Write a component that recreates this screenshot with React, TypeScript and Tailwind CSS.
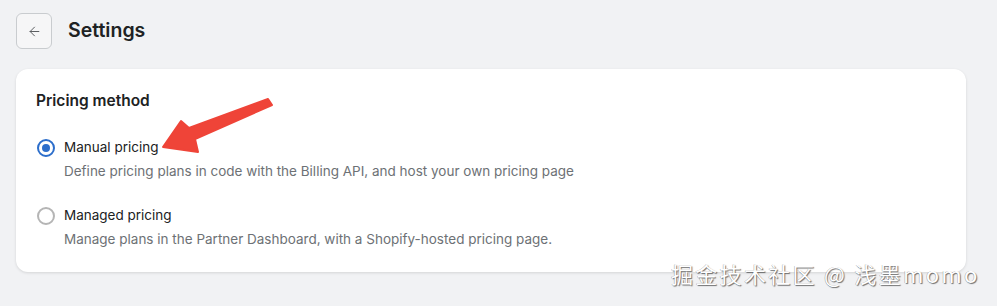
import { ArrowLeft } from "lucide-react";

const options = [
  {
    id: "manual",
    label: "Manual pricing",
    hint: "Define pricing plans in code with the Billing API, and host your own pricing page",
    checked: true,
  },
  {
    id: "managed",
    label: "Managed pricing",
    hint: "Manage plans in the Partner Dashboard, with a Shopify-hosted pricing page.",
    checked: false,
  },
];

function Radio({ checked }: { checked: boolean }) {
  if (checked) {
    return (
      <span className="block shrink-0 w-[18px] h-[18px] rounded-full border-2 border-[#2c6ecb] flex items-center justify-center bg-white">
        <span className="block w-[8px] h-[8px] rounded-full bg-[#2c6ecb]" />
      </span>
    );
  }
  return <span className="block shrink-0 w-[18px] h-[18px] rounded-full border-2 border-[#b5b5b5] bg-white" />;
}

export default function App() {
  return (
    <div
      className="relative w-[997px] h-[306px] bg-[#f1f2f4] overflow-hidden px-4 pt-[13px]"
      style={{ fontFamily: "Inter, 'Noto Sans', sans-serif" }}
    >
      {/* header */}
      <div className="flex items-center gap-4 h-[36px]">
        <button className="w-[36px] h-[36px] rounded-[6px] border border-[#c9cccf] bg-[#f6f6f7] flex items-center justify-center text-[#5c5f62]">
          <ArrowLeft size={15} strokeWidth={1.6} />
        </button>
        <h1 className="text-[19.5px] font-semibold text-[#202223]">Settings</h1>
      </div>

      {/* card */}
      <div className="mt-[20px] w-[950px] bg-white rounded-[12px] shadow-[0_1px_3px_rgba(0,0,0,0.12)] px-5 pt-[23px] pb-[24px]">
        <h2 className="text-[15.5px] font-semibold text-[#202223] leading-[18px]">Pricing method</h2>
        <div className="mt-[28px] flex flex-col gap-[26px]">
          {options.map((o) => (
            <div key={o.id} className="flex gap-[9px]">
              <div className="pt-[1px] pl-[1px]">
                <Radio checked={o.checked} />
              </div>
              <div className="flex flex-col gap-[6px]">
                <span className="text-[13.5px] text-[#202223] leading-[18px]">{o.label}</span>
                <span className="text-[13.5px] text-[#6d7175] leading-[18px]">{o.hint}</span>
              </div>
            </div>
          ))}
        </div>
      </div>

      {/* annotation arrow */}
      <svg className="absolute left-0 top-0 pointer-events-none" width="997" height="306">
        <polygon
          points="163,147 181,121 189,128 268,99 272,105 195,139 198,152"
          fill="#ef4438"
          stroke="#ef4438"
          strokeWidth="2"
          strokeLinejoin="round"
        />
      </svg>

      {/* watermark */}
      <div
        className="absolute left-[671px] top-[261px] text-[22px] leading-[24px] text-white tracking-[2.3px] whitespace-nowrap"
        style={{
          fontFamily: "'Noto Sans CJK SC', 'Noto Sans', sans-serif",
          textShadow: "1px 1px 1px rgba(0,0,0,0.55), -0.5px -0.5px 0 rgba(0,0,0,0.35)",
        }}
      >
        掘金技术社区 @ 浅墨momo
      </div>
    </div>
  );
}
